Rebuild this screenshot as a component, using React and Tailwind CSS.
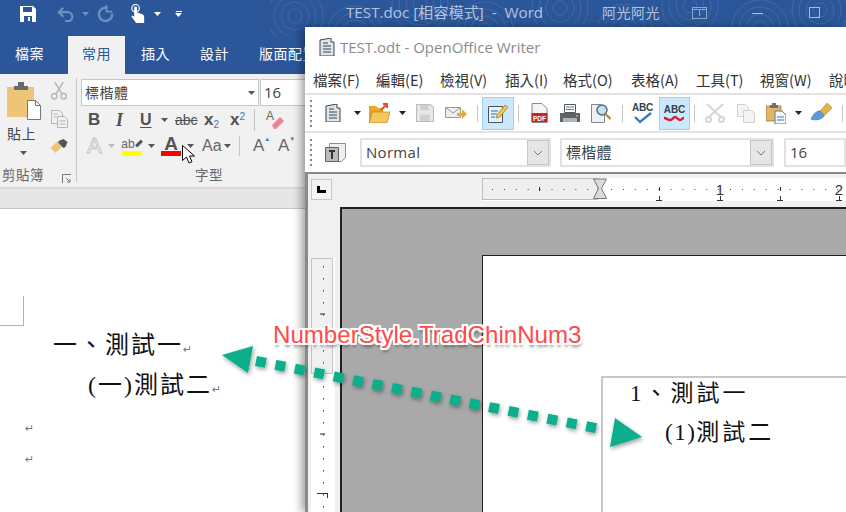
import React from 'react';

const cjk = "font-['Noto_Sans_CJK_TC','Noto_Sans',sans-serif]";

const Caret = ({ className = '', color = '#555' }) => (
  <svg width="7" height="4" viewBox="0 0 7 4" className={`shrink-0 ${className}`}>
    <path d="M0 0h7L3.5 4z" fill={color} />
  </svg>
);

const Swirls = () => (
  <svg className="absolute left-[270px] top-0" width="576" height="36" viewBox="0 0 576 36" fill="none" stroke="#fff" strokeOpacity="0.1">
    {[[25, 16], [85, 34], [150, 4], [215, 30], [290, 8], [355, 32], [420, 6], [490, 28], [550, 10]].map(([x, y]) => (
      <g key={x}>
        <circle cx={x} cy={y} r="7" />
        <circle cx={x} cy={y} r="14" />
        <circle cx={x} cy={y} r="21" />
        <circle cx={x} cy={y} r="28" />
      </g>
    ))}
  </svg>
);

const QuickAccess = () => (
  <div className="flex items-center pl-[20px] h-[27px] w-[346px] shrink-0">
    <svg width="16" height="16" viewBox="0 0 16 16">
      <path d="M0 0h13l3 3v13H0z" fill="#fff" />
      <path d="M3 1h9v5H3z" fill="#2b579a" />
      <path d="M4 10h8v6H4z" fill="#2b579a" />
      <path d="M8 11h2v4H8z" fill="#fff" />
    </svg>
    <svg width="18" height="16" viewBox="0 0 20 16" className="ml-[21px]" fill="none" stroke="#6f8fc0" strokeWidth="2.4">
      <path d="M2 6h10a5 5 0 0 1 0 10H9" />
      <path d="M7 1L2 6l5 5" />
    </svg>
    <Caret className="ml-[7px]" color="#6f8fc0" />
    <svg width="17" height="17" viewBox="0 0 18 18" className="ml-[8px]" fill="none" stroke="#6f8fc0" strokeWidth="2.6">
      <path d="M11 3.2A7 7 0 1 0 16 9" />
      <path d="M10 0v7h6" strokeWidth="2" />
    </svg>
    <svg width="15" height="19" viewBox="0 0 15 20" className="ml-[16px]">
      <circle cx="5.500" cy="4.500" r="4" fill="none" stroke="#fff" strokeWidth="1.200" />
      <path d="M4 4a1.500 1.500 0 0 1 3 0v5l5 1.500c1.500.5 2.500 1.500 2.500 3V20H6L1 13l1-1 2 1.500z" fill="#fff" />
    </svg>
    <Caret className="ml-[9px]" color="#fff" />
    <div className="ml-[14px] flex flex-col items-center gap-[1px]">
      <div className="w-[6px] h-[1px] bg-white" />
      <Caret color="#fff" />
    </div>
  </div>
);

const WordTitle = () => (
  <div className={`relative h-[36px] bg-[#2b579a] overflow-hidden ${cjk}`}>
    <Swirls />
    <div className="relative flex items-start text-[#b4c4dd]">
      <QuickAccess />
      <div className="w-[256px] shrink-0 pt-[1px] text-[15.200px] leading-[22px] whitespace-pre font-['Open_Sans','Noto_Sans_CJK_TC',sans-serif]">TEST.doc [相容模式]  -  Word</div>
      <div className="w-[90px] shrink-0 pt-[1px] text-[14px] leading-[22px] tracking-[0.5px]">阿光阿光</div>
      <div className="w-[15px] h-[12px] mt-[7px] border border-[#8ba4c8] flex flex-col items-center shrink-0">
        <div className="w-full h-[2px] border-b border-[#8ba4c8]" />
        <div className="w-[1px] h-[6px] bg-[#8ba4c8]" />
      </div>
      <div className="w-[11px] h-[1px] mt-[13px] ml-[45px] bg-[#a9bcd8] shrink-0" />
      <div className="w-[11px] h-[11px] mt-[7px] ml-[46px] border border-[#a9bcd8] shrink-0" />
    </div>
  </div>
);

const WordTabs = () => (
  <div className={`flex h-[38px] bg-[#2b579a] text-[14px] text-white tracking-[0.5px] ${cjk}`}>
    <div className="w-[68px] pl-[15px] pt-[7px]">檔案</div>
    <div className="w-[57px] bg-[#f1f1f1] text-[#2b579a] text-center pt-[7px]">常用</div>
    <div className="w-[59px] pl-[16px] pt-[7px]">插入</div>
    <div className="w-[59px] pl-[16px] pt-[7px]">設計</div>
    <div className="pl-[16px] pt-[7px]">版面配置</div>
  </div>
);

const PasteIcon = () => (
  <svg width="35" height="38" viewBox="0 0 35 38" className="ml-[7px] shrink-0">
    <path d="M0 5h27v30H0z" fill="#eec477" />
    <path d="M7 4h4V0h6v4h4v4H7z" fill="#6a6a6a" />
    <path d="M20.500 18.500h8l5 5v14h-13z" fill="#fff" stroke="#777" />
    <path d="M28.500 18.500v5h5" fill="none" stroke="#777" />
  </svg>
);

const SmallClip = () => (
  <div className="flex flex-col items-center ml-[8px]">
    <svg width="16" height="18" viewBox="0 0 17 19" fill="none" stroke="#b5b5b5" strokeWidth="1.500">
      <path d="M4 0l8 13M13 0L5 13" />
      <circle cx="3.500" cy="15" r="2.800" />
      <circle cx="13.500" cy="15" r="2.800" />
    </svg>
    <svg width="17" height="18" viewBox="0 0 17 18" fill="#f1f1f1" stroke="#b5b5b5" className="mt-[10px]">
      <path d="M.5.5h8l3 3v10H.5z" />
      <path d="M6.500 6.500h7l3 3v8h-10z" />
      <path d="M2.500 4h4M2.500 7h3M8.500 11h6M8.500 14h6" />
    </svg>
    <svg width="18" height="15" viewBox="0 0 17 15" className="mt-[11px]">
      <path d="M0 9l7-7 5 5-7 7z" fill="#eec477" />
      <path d="M8 2l5-2 4 3-2 5-2 1-5-5z" fill="#555" />
    </svg>
  </div>
);

const Sep = ({ className = '' }) => <div className={`w-px bg-[#c6c6c6] shrink-0 ${className}`} />;

const FontGroup = () => (
  <div className={`flex flex-col pl-[4px] w-[240px] ${cjk}`}>
    <div className="flex h-[27px] gap-[1px]">
      <div className="w-[178px] bg-white border border-[#c6c6c6] flex items-center justify-between pl-[3px] pr-[3px] text-[14px] text-[#444] tracking-[0.5px]">
        標楷體<Caret />
      </div>
      <div className="flex-1 bg-white border border-[#c6c6c6] flex items-center justify-between pl-[3px] pr-[3px] text-[15px] text-[#444] font-['Open_Sans',sans-serif]">
        16<Caret />
      </div>
    </div>
    <div className="flex items-center h-[26px] mt-[1px] pl-[7px] text-[#505050] font-['Liberation_Sans',sans-serif]">
      <span className="w-[28px] text-[17px] font-bold">B</span>
      <span className="w-[24px] text-[18px] font-bold italic font-['Liberation_Serif',serif]">I</span>
      <span className="w-[19px] text-[16px] font-bold underline underline-offset-2">U</span>
      <Caret className="ml-[2px]" />
      <span className="ml-[7px] w-[29px] text-[14px] line-through">abc</span>
      <span className="w-[26px] text-[17px] leading-[20px] font-bold">x<sub className="text-[10px] text-[#3f78b5] font-normal">2</sub></span>
      <span className="w-[24px] text-[17px] leading-[20px] font-bold">x<sup className="text-[10px] text-[#3f78b5] font-normal">2</sup></span>
      <Sep className="h-[22px]" />
      <svg width="18" height="20" viewBox="0 0 18 20" className="ml-[11px]">
        <path d="M6 15l8-8 4 4-8 8H8z" fill="#eb8596" />
        <text x="0" y="10" fontSize="12" fill="#666" fontFamily="Liberation Sans">A</text>
      </svg>
    </div>
    <div className="flex items-center h-[26px] pl-[6px] text-[#666] font-['Liberation_Sans',sans-serif]">
      <span className="w-[22px] text-[22px] leading-[24px] text-white [-webkit-text-stroke:1px_#c4c4c4]">A</span>
      <Caret className="-ml-[1px]" color="#bbb" />
      <div className="ml-[7px] w-[20px] flex flex-col items-center leading-none">
        <div className="flex items-center h-[15px] text-[12px]">ab<span className="inline-block w-[8px] h-[3px] bg-[#555] -rotate-45" /></div>
        <div className="w-[20px] h-[5px] bg-[#ffff00]" />
      </div>
      <Caret className="ml-[6px]" />
      <div className="ml-[6px] w-[20px] flex flex-col items-center leading-none">
        <span className="text-[19px] font-bold h-[15px] leading-[15px] text-[#555]">A</span>
        <div className="w-[20px] h-[5px] bg-[#ff0000]" />
      </div>
      <Caret className="ml-[6px]" />
      <span className="ml-[8px] w-[22px] text-[16px]">Aa</span>
      <Caret />
      <Sep className="h-[20px] ml-[8px]" />
      <span className="ml-[13px] w-[25px] text-[17px]">A<span className="text-[6px] align-[10px] text-[#3f78b5]">▲</span></span>
      <span className="text-[17px]">A<span className="text-[6px] align-[10px] text-[#3f78b5]">▼</span></span>
    </div>
  </div>
);

const Ribbon = () => (
  <div className={`flex h-[113px] bg-[#f1f1f1] ${cjk}`}>
    <div className="relative w-[76px] shrink-0">
      <div className="flex pt-[8px]">
        <PasteIcon />
        <SmallClip />
      </div>
      <div className="absolute left-[7px] top-[49px] text-[14px] text-[#444] tracking-[0.5px]">貼上</div>
      <Caret className="absolute left-[20px] top-[77px]" />
      <div className="absolute left-[2px] top-[90px] text-[13.500px] text-[#666] tracking-[0.5px]">剪貼簿</div>
      <svg className="absolute left-[62px] top-[100px]" width="9" height="9" viewBox="0 0 9 9" fill="none" stroke="#777">
        <path d="M.5 9V.5H9M4 4l4 4M8 5v3H5" />
      </svg>
    </div>
    <Sep className="h-[104px] mt-[4px]" />
    <div className="relative pt-[5px]">
      <FontGroup />
      <div className="absolute left-[118px] top-[90px] text-[13.500px] text-[#666] tracking-[0.5px]">字型</div>
    </div>
  </div>
);

const WordDoc = () => (
  <div className="flex-1 bg-white font-['Liberation_Serif','Noto_Sans_CJK_TC',serif] text-[#111]">
    <div className="w-[24px] h-[30px] mt-[87px] border-r border-b border-[#b0b0b0]" />
    <div className="pl-[53px] mt-[1px] flex flex-col">
      <div className="h-[40px] leading-[36px] text-[24px] tracking-[2px] whitespace-nowrap">一、測試一<span className="text-[11px] text-[#777] font-['DejaVu_Sans',sans-serif] tracking-normal">↵</span></div>
      <div className="h-[41px] pl-[35px] leading-[36px] text-[24px] tracking-[2px] whitespace-nowrap">(一)測試二<span className="text-[11px] text-[#777] font-['DejaVu_Sans',sans-serif] tracking-normal">↵</span></div>
    </div>
    <div className="pl-[25px] pt-[13px] flex flex-col font-['DejaVu_Sans',sans-serif] text-[11px] text-[#777]">
      <div className="h-[31px] leading-[16px]">↵</div>
      <div className="leading-[16px]">↵</div>
    </div>
  </div>
);

const DocIcon = ({ size = 18 }) => (
  <svg width={size} height={size} viewBox="0 0 18 18">
    <path d="M2 2l11-2v4h3v14H2z" fill="#dfe4e8" stroke="#38454f" />
    <path d="M5 8h8M5 11h8M5 14h8M5 5h5" stroke="#38454f" />
  </svg>
);

const ToolBtn = ({ active, children, className = '' }) => (
  <div className={`flex h-[33px] items-center justify-center shrink-0 ${active ? 'bg-[#cce8ff] border border-[#99d1ff]' : ''} ${className}`}>
    {children}
  </div>
);

const Grip = () => (
  <div className="flex flex-col gap-[3px] ml-[5px] mr-[10px] shrink-0">
    {[0, 1, 2, 3, 4, 5].map((i) => <div key={i} className="w-[2px] h-[2px] bg-[#888]" />)}
  </div>
);

const WriterToolbar = () => (
  <div className="flex items-center h-[40px] shrink-0 border-t-2 border-b-2 border-[#e3e3e3] bg-white">
    <Grip />
    <ToolBtn className="w-[18px] ml-[2px]"><DocIcon /></ToolBtn>
    <Caret className="ml-[12px]" color="#222" />
    <ToolBtn className="w-[21px] ml-[8px]">
      <svg width="21" height="20" viewBox="0 0 21 20">
        <path d="M0 3h7l2 2h5v15H0z" fill="#e9a72c" />
        <path d="M3 9h18l-3 11H0z" fill="#f4c95a" stroke="#a8741a" strokeWidth=".6" />
        <path d="M12 7l6-6M14 1h4v4" stroke="#e2502f" strokeWidth="2" fill="none" />
      </svg>
    </ToolBtn>
    <Caret className="ml-[9px]" color="#222" />
    <ToolBtn className="w-[18px] ml-[10px]">
      <svg width="18" height="18" viewBox="0 0 17 17">
        <path d="M.5.500h13l3 3v13H.5z" fill="#e8e8e8" stroke="#bcbcbc" />
        <path d="M4 1h8v5H4zM4 10h9v6H4z" fill="#cfcfcf" />
      </svg>
    </ToolBtn>
    <ToolBtn className="w-[22px] ml-[11px]">
      <svg width="22" height="14" viewBox="0 0 22 14">
        <path d="M.5 1.500h15v10H.5z" fill="#eee" stroke="#999" />
        <path d="M1 2l7 5 7-5" fill="none" stroke="#999" />
        <path d="M12 7h5V3l5 5-5 5V10h-5z" fill="#e8a93a" />
      </svg>
    </ToolBtn>
    <Sep className="h-[17px] ml-[10px]" />
    <ToolBtn active className="w-[32px] ml-[4px]">
      <svg width="20" height="20" viewBox="0 0 20 20">
        <path d="M.5 3.500h14v16H.5z" fill="#e9f1f7" stroke="#46555f" />
        <path d="M3 8h7M3 11h6M3 14h4" stroke="#1f6fb3" />
        <path d="M8 15l1-3 8-10 3 2-8 10z" fill="#f2c84b" stroke="#8a6418" strokeWidth=".6" />
      </svg>
    </ToolBtn>
    <Sep className="h-[17px] ml-[4px]" />
    <ToolBtn className="w-[17px] ml-[12px]">
      <svg width="17" height="20" viewBox="0 0 16 20">
        <path d="M.5.500h10l5 5v14H.5z" fill="#f4f4f4" stroke="#888" />
        <path d="M0 10h16v9H0z" fill="#c8252b" />
        <text x="8" y="17.500" fontSize="6.500" fontWeight="bold" fill="#fff" textAnchor="middle" fontFamily="Liberation Sans">PDF</text>
      </svg>
    </ToolBtn>
    <ToolBtn className="w-[20px] ml-[12px]">
      <svg width="20" height="19" viewBox="0 0 20 19">
        <path d="M4.500.500h11v8h-11z" fill="#fff" stroke="#555" />
        <path d="M6 3h8M6 5.500h8" stroke="#3a7fb5" />
        <path d="M0 9h20v9H0z" fill="#5c6368" />
        <path d="M3 14h14v4H3z" fill="#aeb4b8" />
        <path d="M16 11h2v1.500h-2z" fill="#7bd45a" />
      </svg>
    </ToolBtn>
    <ToolBtn className="w-[20px] ml-[11px]">
      <svg width="20" height="20" viewBox="0 0 20 20" fill="none">
        <path d="M.5 1.500h9l4 4v14H.5z" fill="#eef1f3" stroke="#7c8890" />
        <circle cx="11" cy="7" r="5" fill="#bfe0f5" stroke="#51687a" strokeWidth="1.400" />
        <path d="M14.500 11l5 5" stroke="#c0892b" strokeWidth="2.400" />
      </svg>
    </ToolBtn>
    <Sep className="h-[17px] ml-[11px]" />
    <ToolBtn className="w-[21px] ml-[9px]">
      <div className="relative w-[21px] h-[21px]">
        <span className="block text-[10px] leading-[10px] font-bold text-[#34424c] font-['Liberation_Sans',sans-serif] tracking-[-0.2px]">ABC</span>
        <svg className="absolute left-[2px] top-[9px]" width="18" height="12" viewBox="0 0 18 12" fill="none" stroke="#2d7fc4" strokeWidth="2.400">
          <path d="M1 5l5 5L17 1" />
        </svg>
      </div>
    </ToolBtn>
    <ToolBtn active className="w-[31px] ml-[6px]">
      <div className="flex flex-col items-center">
        <span className="block text-[10px] leading-[11px] font-bold text-[#34424c] font-['Liberation_Sans',sans-serif]">ABC</span>
        <svg width="20" height="7" viewBox="0 0 20 7" fill="none" stroke="#d3222a" strokeWidth="2.400">
          <path d="M0 3c3 0 3 2 6 2s3-3 5-3 3 3 5 3 2-2 4-2" />
        </svg>
      </div>
    </ToolBtn>
    <Sep className="h-[17px] ml-[4px]" />
    <ToolBtn className="w-[20px] ml-[10px]">
      <svg width="20" height="20" viewBox="0 0 20 20" fill="none" stroke="#d5d5d5" strokeWidth="2">
        <path d="M18 1L4 14M2 1l14 13" />
        <circle cx="3.500" cy="16.500" r="2.500" />
        <circle cx="16.500" cy="16.500" r="2.500" />
      </svg>
    </ToolBtn>
    <ToolBtn className="w-[19px] ml-[11px]">
      <svg width="18" height="19" viewBox="0 0 18 19" fill="#f4f4f4" stroke="#d0d0d0">
        <path d="M.5.500h8l3 3v9H.5z" />
        <path d="M6.500 6.500h8l3 3v9h-11z" />
      </svg>
    </ToolBtn>
    <ToolBtn className="w-[20px] ml-[11px]">
      <svg width="20" height="21" viewBox="0 0 20 21">
        <path d="M0 3h15v15H0z" fill="#e4b566" stroke="#6e5a34" strokeWidth=".6" />
        <path d="M4 2h2V0h4v2h2v3H4z" fill="#707070" />
        <path d="M9 8h7l4 4v9H9z" fill="#f6f8fa" stroke="#60788c" />
        <path d="M11 14h7M11 17h7" stroke="#2f7cc0" />
      </svg>
    </ToolBtn>
    <Caret className="ml-[9px]" color="#222" />
    <ToolBtn className="w-[21px] ml-[9px]">
      <svg width="21" height="21" viewBox="0 0 22 22">
        <path d="M0 17c3-7 6-8 9-9l5 5c-2 3-6 6-14 4z" fill="#5b9bd8" stroke="#2e6aa5" strokeWidth=".6" />
        <path d="M10 8l7-8 5 5-8 8z" fill="#e6b54a" stroke="#8f6b1f" strokeWidth=".6" />
      </svg>
    </ToolBtn>
    <Sep className="h-[17px] ml-[10px]" />
  </div>
);

const Combo = ({ w, children }) => (
  <div className="flex items-center justify-between h-[29px] border-2 border-[#e2e2e2] bg-white shrink-0" style={{ width: w }}>
    <span className="pl-[4px] text-[15px] text-[#444] tracking-[0.3px] font-['Open_Sans','Noto_Sans_CJK_TC',sans-serif]">{children}</span>
    <div className="flex h-[25px] w-[22px] items-center justify-center bg-[#e6e6e6] border border-[#c6c6c6]">
      <svg width="10" height="6" viewBox="0 0 10 6" fill="none" stroke="#777"><path d="M1 1l4 4 4-4" /></svg>
    </div>
  </div>
);

const Formatting = () => (
  <div className="flex items-center h-[39px] shrink-0 bg-white">
    <Grip />
    <svg width="21" height="20" viewBox="0 0 21 20" className="ml-[3px] shrink-0">
      <path d="M4.500.500h16v14l-4 4h-12z" fill="#f0f0f0" stroke="#8d8d8d" />
      <path d="M.5 4.500h13v14H.5z" fill="#b9bcbf" stroke="#5f6366" />
      <path d="M4 7h6v2H8v7H6V9H4z" fill="#333" />
    </svg>
    <div className="ml-[14px]"><Combo w={191}>Normal</Combo></div>
    <div className="ml-[9px]"><Combo w={214}>標楷體</Combo></div>
    <div className="ml-[10px] flex items-center h-[29px] w-[120px] border-2 border-[#e2e2e2] pl-[4px] text-[15px] text-[#444] font-['Open_Sans',sans-serif]">16</div>
  </div>
);

const HRuler = () => (
  <svg width="364" height="24" viewBox="0 0 364 24" className="block">
    <rect x="0" y="0" width="364" height="23" fill="#fff" />
    <rect x=".5" y=".5" width="115" height="21" fill="#efefef" stroke="#bdbdbd" />
    {Array.from({ length: 30 }, (_, i) => 10 + i * 11.9).filter((x) => Math.abs(x - 118) > 8).map((x) => (
      <rect key={x} x={x} y="11" width="1" height="1" fill="#444" />
    ))}
    {[177, 238, 298, 357].map((x) => (
      <path key={x} d={`M${x - 3} 22.500h6M${x}.5 18v4`} stroke="#333" fill="none" />
    ))}
    <path d="M57.500 9v4M177.500 9v4M298.500 9v4" stroke="#333" />
    <path d="M111.500 1h13l-5 9.500 5 10h-13l5-10z" fill="#dcdcdc" stroke="#777" />
    <text x="238" y="17" fontSize="15" textAnchor="middle" fill="#333" fontFamily="Liberation Sans">1</text>
    <text x="357" y="17" fontSize="15" textAnchor="middle" fill="#333" fontFamily="Liberation Sans">2</text>
  </svg>
);

const VRuler = () => (
  <svg width="24" height="254" viewBox="0 0 24 254" className="block">
    <rect x="0" y="0" width="24" height="254" fill="#fff" />
    <rect x=".5" y=".5" width="21" height="115" fill="#f0f0f0" stroke="#c4c4c4" />
    {Array.from({ length: 22 }, (_, i) => 8 + i * 12).map((y) => (
      <rect key={y} x="12" y={y} width="1" height="1.500" fill="#444" />
    ))}
    <path d="M9 56h5M9 176h5" stroke="#222" />
    <path d="M6 235.500h11M16.500 235v5" stroke="#333" />
  </svg>
);

const WriterWindow = () => (
  <div className="absolute left-[305px] top-[27px] w-[541px] h-[485px] flex flex-col bg-white shadow-[-4px_0_8px_rgba(0,0,0,0.35)] overflow-hidden">
    <div className="h-[34px] flex items-center pl-[13px] pt-[6px] shrink-0">
      <DocIcon />
      <span className="ml-[4px] text-[15px] text-[#8b8b8b] font-['Open_Sans',sans-serif] whitespace-nowrap">TEST.odt - OpenOffice Writer</span>
    </div>
    <div className={`h-[32px] flex items-center shrink-0 pl-[8px] pt-[6px] text-[14.500px] text-[#333] whitespace-nowrap ${cjk}`}>
      <span className="w-[63px] shrink-0">檔案(F)</span>
      <span className="w-[64px] shrink-0">編輯(E)</span>
      <span className="w-[65px] shrink-0">檢視(V)</span>
      <span className="w-[58px] shrink-0">插入(I)</span>
      <span className="w-[68px] shrink-0">格式(O)</span>
      <span className="w-[65px] shrink-0">表格(A)</span>
      <span className="w-[64px] shrink-0">工具(T)</span>
      <span className="w-[69px] shrink-0">視窗(W)</span>
      <span>說明</span>
    </div>
    <WriterToolbar />
    <Formatting />
    <div className="flex-1 min-h-0 flex flex-col bg-[#f0f0f0] border-l-[3px] border-t-[2px] border-[#8a8a8a]">
      <div className="flex h-[33px] shrink-0 items-start">
        <div className="ml-[3px] mt-[5px] w-[22px] h-[21px] border border-[#c8c8c8] flex items-center justify-center bg-[#f4f4f4]">
          <div className="w-[9px] h-[7px] border-l-[3px] border-b-[3px] border-black" />
        </div>
        <div className="ml-[150px] mt-[4px]"><HRuler /></div>
      </div>
      <div className="flex flex-1 min-h-0 items-stretch">
        <div className="ml-[3px] w-[29px] shrink-0 pt-[51px]"><VRuler /></div>
        <div className="flex-1 bg-[#a9a9a9] border-l-2 border-t-2 border-[#222] pl-[140px] pt-[46px]">
          <div className="h-full bg-white border-l border-t border-[#222] pl-[118px] pt-[120px]">
            <div className="h-full border-l-2 border-t-2 border-[#c8c8c8] font-['Liberation_Serif','Noto_Sans_CJK_TC',serif] text-[#111]">
              <div className="pl-[27px] h-[39px] text-[23px] leading-[32px] tracking-[3px] whitespace-nowrap">1、測試一</div>
              <div className="pl-[62px] text-[23px] leading-[32px] tracking-[3px] whitespace-nowrap"><span className="tracking-[1.500px]">(1)</span>測試二</div>
            </div>
          </div>
        </div>
      </div>
    </div>
  </div>
);

const Annotation = () => (
  <>
    <svg className="absolute left-0 top-0 pointer-events-none" width="846" height="512" viewBox="0 0 846 512">
      <defs>
        <filter id="drop" x="-10%" y="-30%" width="120%" height="160%">
          <feDropShadow dx="1" dy="2" stdDeviation="2" floodColor="#000" floodOpacity="0.4" />
        </filter>
      </defs>
      <g filter="url(#drop)" fill="#08ae8c">
        <path d="M256 361L600 429" stroke="#08ae8c" strokeWidth="10" strokeDasharray="10 9.800" />
        <path d="M222 355L253 346L248 373z" />
        <path d="M615 418L642 437L610 447z" />
      </g>
    </svg>
    <div className="absolute left-[273px] top-[321px] text-[24.100px] leading-[28px] text-[#fb4b4b] whitespace-nowrap font-['Liberation_Sans',sans-serif] [text-shadow:-2px_-2px_0_#fff,2px_-2px_0_#fff,-2px_2px_0_#fff,2px_2px_0_#fff,0_-2px_0_#fff,0_2px_0_#fff,-2px_0_0_#fff,2px_0_0_#fff,1px_4px_3px_rgba(0,0,0,0.5)]">
      NumberStyle.TradChinNum3
    </div>
    <svg className="absolute left-[182px] top-[145px]" width="13" height="20" viewBox="0 0 13 20">
      <path d="M.5.500v15l4-3.500 2.500 6 3-1.300-2.500-5.700h5z" fill="#fff" stroke="#000" />
    </svg>
  </>
);

export default function App() {
  return (
    <div className="relative w-[846px] h-[512px] overflow-hidden bg-white">
      <div className="flex flex-col h-full">
        <WordTitle />
        <WordTabs />
        <Ribbon />
        <div className="h-[22px] shrink-0 bg-[#e6e6e6] border-t-2 border-[#d9d9d9] border-b border-b-[#c6c6c6]" />
        <WordDoc />
      </div>
      <WriterWindow />
      <Annotation />
    </div>
  );
}
